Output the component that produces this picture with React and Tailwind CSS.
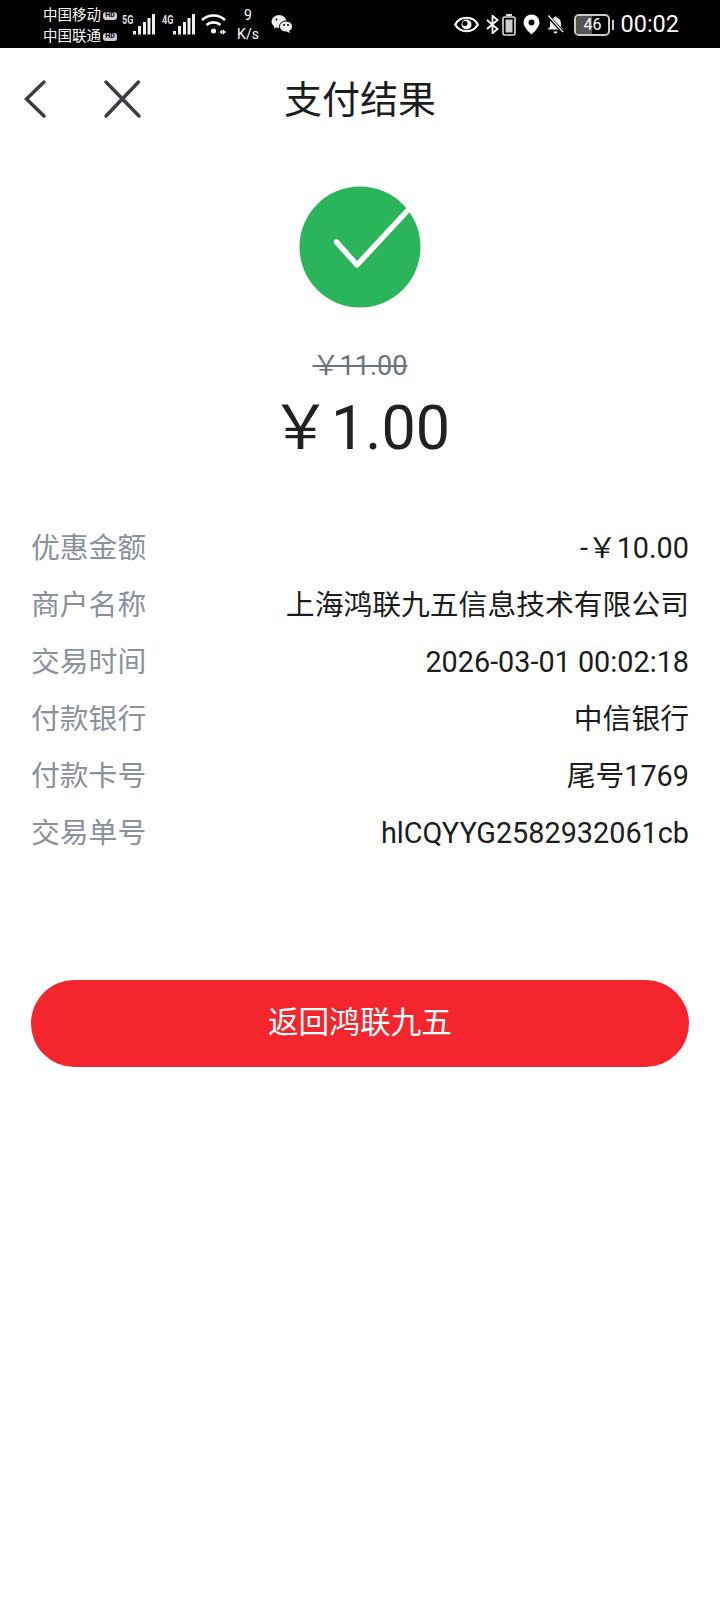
const cjk = "font-['Roboto','Noto_Sans_CJK_SC',sans-serif]";

const rows = [
  ["优惠金额", "-￥10.00"],
  ["商户名称", "上海鸿联九五信息技术有限公司"],
  ["交易时间", "2026-03-01 00:02:18"],
  ["付款银行", "中信银行"],
  ["付款卡号", "尾号1769"],
  ["交易单号", "hlCQYYG2582932061cb"],
];

function Signal({ label }) {
  return (
    <div className="flex h-[22px] items-start">
      <span className="mt-[1px] w-[11px] origin-left scale-x-[0.7] text-[13px] font-bold leading-[10px] text-[#ddd]">{label}</span>
      <svg width="22" height="21" viewBox="0 0 22 21" fill="#eee">
        <rect x="0" y="17" width="3" height="3.500" />
        <rect x="5" y="12" width="3" height="8.500" />
        <rect x="10" y="8" width="3" height="12.500" />
        <rect x="14.500" y="4" width="3" height="16.500" />
        <rect x="19" y="0" width="3" height="20.500" />
      </svg>
    </div>
  );
}

function HdTag() {
  return (
    <span className="ml-[2px] flex h-[8px] w-[14px] items-center justify-center overflow-hidden rounded-[3px] bg-[#ccc] text-[7px] font-bold leading-none text-black">
      HD
    </span>
  );
}

function StatusBar() {
  return (
    <div className="flex h-12 items-center bg-black pl-[43px] pr-[41px] text-white">
      <div className="mt-[4px] flex w-[79px] flex-col text-[14.500px] leading-[21px]">
        <div className="flex items-center">中国移动<HdTag /></div>
        <div className="flex items-center">中国联通<HdTag /></div>
      </div>
      <div className="mt-[1px] flex items-center gap-[7px]">
        <Signal label="5G" />
        <Signal label="4G" />
      </div>
      <svg className="ml-[6px]" width="26" height="22" viewBox="0 0 26 22" fill="none" stroke="#fff" strokeWidth="2.600">
        <path d="M1 7C7.500 1 17.500 1 24 7" />
        <path d="M5.500 12c4-3.500 10-3.500 14 0" />
        <circle cx="12.500" cy="18" r="2.500" fill="#fff" stroke="none" />
        <path d="M18.500 19l3-2.500v5zM22 16.500l3 2.500-3 2.500z" fill="#fff" stroke="none" />
      </svg>
      <div className="ml-[10px] mt-[1px] w-[22px] text-center text-[14px] leading-[19px]">9<br />K/s</div>
      <svg className="ml-[12px]" width="22" height="18" viewBox="0 0 22 18" fill="#eee">
        <ellipse cx="8" cy="6.500" rx="7.500" ry="6.500" />
        <path d="M3.500 10l-.5 3.500 3.500-2z" />
        <ellipse cx="15" cy="11.500" rx="6.500" ry="5.500" stroke="#000" strokeWidth="1" />
        <path d="M18 15.500l1 2.500-3.500-1.500z" />
        <circle cx="13" cy="10" r="1" fill="#000" />
        <circle cx="17" cy="10" r="1" fill="#000" />
        <circle cx="5.500" cy="4.500" r="1" fill="#000" />
      </svg>
      <div className="ml-auto mt-[1px] flex items-center">
        <svg width="25" height="17" viewBox="0 0 25 17" fill="none">
          <path d="M1.200 8.500C6-.5 19-.5 23.800 8.500 19 17.500 6 17.500 1.200 8.500z" stroke="#fff" strokeWidth="2.200" />
          <circle cx="12.500" cy="8.500" r="5" fill="#fff" />
          <circle cx="11" cy="7.500" r="2.600" fill="#000" />
        </svg>
        <svg className="ml-[7px]" width="13" height="19" viewBox="0 0 13 19" fill="none" stroke="#fff" strokeWidth="1.800">
          <path d="M1 5l10.500 9-5 4.200V.8l5 4.200L1 14" />
        </svg>
        <svg className="ml-[3px]" width="14" height="22" viewBox="0 0 14 22" fill="none">
          <rect x="4" y="0" width="6" height="2" fill="#ddd" />
          <rect x="1" y="3" width="12" height="18" rx="1.500" stroke="#ddd" strokeWidth="1.600" />
          <rect x="3.500" y="5.500" width="7" height="13" fill="#ccc" />
        </svg>
        <svg className="ml-[7px]" width="17" height="21" viewBox="0 0 17 21">
          <path fillRule="evenodd" fill="#fff" d="M8.500.5A8 8 0 0 0 .5 8.500C.5 13.500 8.500 20.500 8.500 20.500s8-7 8-12a8 8 0 0 0-8-8zm0 5a3 3 0 1 1 0 6 3 3 0 0 1 0-6z" />
        </svg>
        <svg className="ml-[6px]" width="19" height="20" viewBox="0 0 20 20" fill="#eee">
          <path d="M10 1c.8 0 1.300.6 1.400 1.300 3 .7 4.400 3 4.400 6v3.500l2.700 3H1.500l2.700-3V8.300c0-3 1.500-5.300 4.400-6C8.700 1.600 9.200 1 10 1z" />
          <path d="M7.800 16.800h4.400a2.200 2.200 0 0 1-4.400 0z" />
          <path d="M3 1.500l15 16" stroke="#000" strokeWidth="3.500" />
          <path d="M2.500 0l15.500 17.500" stroke="#eee" strokeWidth="1.500" />
        </svg>
        <div className="relative ml-[9px] flex h-[22px] w-[36px] items-center justify-center overflow-hidden rounded-[5px] border-2 border-[#ccc] text-[16px] leading-none">
          <div className="absolute inset-y-0 left-0 w-[16px] bg-[#555]" />
          <span className="relative">46</span>
        </div>
        <div className="ml-[2px] h-[10px] w-[2px] bg-[#ccc]" />
        <span className="ml-[6px] text-[23.500px] leading-none">00:02</span>
      </div>
    </div>
  );
}

export default function App() {
  return (
    <div className={`flex min-h-[1600px] w-[720px] flex-col bg-white ${cjk}`}>
      <StatusBar />

      <div className="relative flex h-[104px] items-center justify-center">
        <svg className="absolute left-[22px] top-[31px]" width="26" height="40" viewBox="0 0 26 40" fill="none" stroke="#3c3c43" strokeWidth="3.500" strokeLinecap="round">
          <path d="M22 3L4.500 20 22 37" />
        </svg>
        <svg className="absolute left-[102px] top-[31px]" width="40" height="40" viewBox="0 0 40 40" fill="none" stroke="#3c3c43" strokeWidth="3.500" strokeLinecap="round">
          <path d="M4 3l33 34M36.500 3L4 37" />
        </svg>
        <h1 className="text-[38px] font-normal leading-none text-[#1c1c1c]">支付结果</h1>
      </div>

      <div className="mt-[34px] flex flex-col items-center">
        <svg width="122" height="122" viewBox="0 0 122 122">
          <circle cx="61" cy="61" r="60.500" fill="#2bb55b" />
          <path d="M37.500 56L58 79 110 23" fill="none" stroke="#fff" strokeWidth="5.500" strokeLinejoin="round" />
          <circle cx="37.500" cy="56" r="2.750" fill="#fff" />
        </svg>
        <div className="mt-[41px] text-[27px] leading-[34px] text-[#6b7280] line-through">￥11.00</div>
        <div className="mt-[10px] text-[61px] leading-[70px] text-[#212121]">￥1.00</div>
      </div>

      <div className="mt-[69px] flex flex-col gap-[25px] px-[31px]">
        {rows.map(([label, value]) => (
          <div key={label} className="flex h-[32px] items-center justify-between text-[28.800px] leading-[32px]">
            <span className="text-[#8a909c]">{label}</span>
            <span className="text-[#1c1c1c]">{value}</span>
          </div>
        ))}
      </div>

      <button className="mx-[31px] mt-[131px] h-[87px] rounded-full bg-[#f5252d] text-[30.700px] text-white">
        返回鸿联九五
      </button>
    </div>
  );
}
